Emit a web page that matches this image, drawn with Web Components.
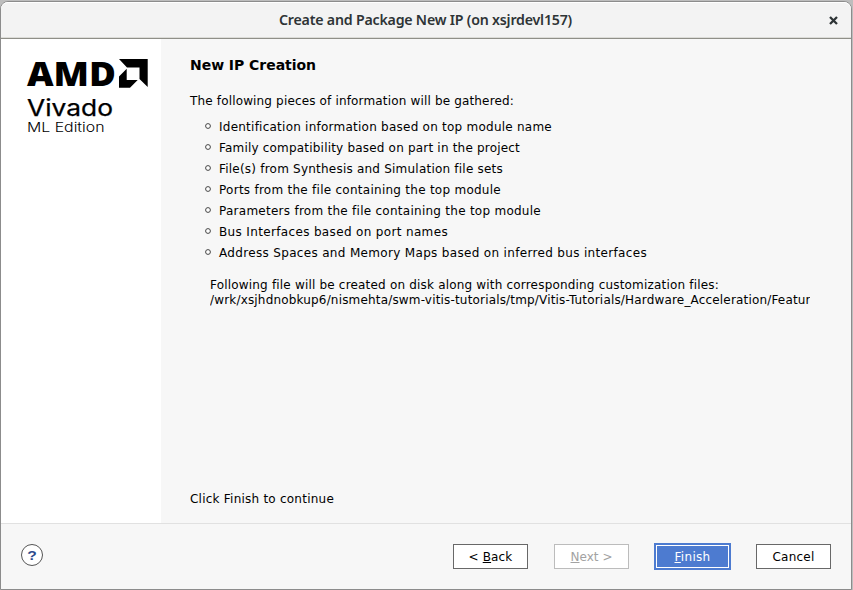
<!DOCTYPE html>
<html lang="en"><head><meta charset="utf-8"><title>Create and Package New IP</title>
<style>
html,body{margin:0;height:100%;overflow:hidden}
body{font:12px/15px "DejaVu Sans",sans-serif;color:#000;background:#bdbdbd}
</style></head><body>
<ip-dialog></ip-dialog>
<script>
const define=(name,html,init)=>customElements.define(name,class extends HTMLElement{
  constructor(){super();this.attachShadow({mode:'open'}).innerHTML=html}
  connectedCallback(){if(init)init(this,this.shadowRoot)}
});

// A single line of text whose tracking is set so that it spans the given width.
define('fit-text',`<style>:host{display:block;white-space:nowrap}span{display:inline-block}</style><span><slot></slot></span>`,(el,root)=>{
  const span=root.querySelector('span');
  requestAnimationFrame(()=>{
    const n=el.textContent.length;
    span.style.letterSpacing=(+el.getAttribute('w')-span.getBoundingClientRect().width)/n+'px';
  });
});

define('title-bar',`<style>
:host{display:grid;grid-template-columns:1fr auto 1fr;align-items:center;height:33px;padding:0 13px 2px 12px;background:#f3f3f3;border-top:1px solid #fff;border-bottom:1px solid #8f8f88;box-shadow:inset 0 -1px #dcdcd8;border-radius:7px 7px 0 0;color:#2e3436;font:600 14.2px/20px "Noto Sans","Open Sans",sans-serif}
::slotted(fit-text){grid-column:2}svg{grid-column:3;justify-self:end;margin-top:1px}
</style><slot></slot>
<svg width="9" height="9" viewBox="0 0 9 9"><path d="M1 1 8 8M8 1 1 8" stroke="#2e3436" stroke-width="2.3"/></svg>`);

define('brand-logo',`<style>:host{display:block}svg{display:block}</style>
<svg width="160" height="110" viewBox="1 39 160 110" fill="#000">
<text x="27" y="86" font-family="Open Sans,sans-serif" font-weight="800" font-size="33" textLength="89" lengthAdjust="spacingAndGlyphs">AMD</text>
<path d="M119 59H147.7V87L139.5 79V67.5H127Z"/><path d="M126.7 68.7 119 76.5V87.7H130L137.7 80H126.7Z"/>
<text x="27" y="115.8" font-family="Inter,sans-serif" font-size="23" stroke="#000" stroke-width=".25" textLength="86" lengthAdjust="spacingAndGlyphs">Vivado</text>
<text x="27" y="131.7" font-family="Inter,sans-serif" font-weight="300" font-size="13.5" textLength="77.5" lengthAdjust="spacingAndGlyphs">ML Edition</text>
</svg>`);

define('bullet-item',`<style>:host{display:flex;align-items:center;height:21px;gap:8px}
svg{flex:none;margin-bottom:3px}</style><svg width="6" height="6" viewBox="0 0 6 6"><circle cx="3" cy="3" r="2.4" fill="#fff" stroke="#444" stroke-width="1"/></svg><slot></slot>`);

define('push-button',`<style>
:host{display:flex;align-items:center;justify-content:center;box-sizing:border-box;width:75px;height:25px;padding-top:1px;border:1px solid #686868;background:#fff;color:#000}
:host([disabled]){border-color:#bcbcbc;color:#a2a2a2}
:host([primary]){width:77px;height:27px;border:2px solid #4d7bd0;box-shadow:inset 0 0 0 1px #fff;background:#4d7bd0;color:#fff}
</style><slot></slot>`);

define('help-button',`<style>:host{display:flex;align-items:center;justify-content:center;box-sizing:border-box;width:22px;height:22px;border:1px solid #555;border-radius:50%;background:#fff;color:#2c4a8c;font:bold 13px/15px "Liberation Sans",sans-serif}span{transform:scaleX(1.2)}</style><span><slot></slot></span>`);

define('ip-dialog',`<style>
:host{display:flex;flex-direction:column;box-sizing:border-box;width:852px;height:590px;padding-top:1px}
.frame{display:flex;flex-direction:column;flex:1;border:1px solid #8c8c8c;border-radius:8px 8px 0 0;background:#f7f7f7;min-height:0}
.body{display:flex;height:484px}
aside{width:160px;background:#fff}
main{display:flex;flex-direction:column;flex:1;padding:18px 40px 16px 29px;min-width:0}
h1{font-size:14px;line-height:17px;margin:0 0 20px}
.list{padding:8px 0 14px 15px}
.note{margin:0 1px 0 20px;overflow:hidden;line-height:15px}
.end{margin-top:auto}
footer{display:flex;align-items:center;flex:1;border-top:1px solid #e1e1e1;padding:0 20px}
help-button{margin:0 auto 3px 0}
.buttons{display:flex;align-items:center}
</style><div class="frame">
<title-bar><fit-text w="293">Create and Package New IP (on xsjrdevl157)</fit-text></title-bar>
<div class="body"><aside><brand-logo></brand-logo></aside><main>
<h1><fit-text w="126">New IP Creation</fit-text></h1>
<fit-text w="324">The following pieces of information will be gathered:</fit-text>
<div class="list">
<bullet-item><fit-text w="333">Identification information based on top module name</fit-text></bullet-item>
<bullet-item><fit-text w="301">Family compatibility based on part in the project</fit-text></bullet-item>
<bullet-item><fit-text w="284">File(s) from Synthesis and Simulation file sets</fit-text></bullet-item>
<bullet-item><fit-text w="282">Ports from the file containing the top module</fit-text></bullet-item>
<bullet-item><fit-text w="322">Parameters from the file containing the top module</fit-text></bullet-item>
<bullet-item><fit-text w="229">Bus Interfaces based on port names</fit-text></bullet-item>
<bullet-item><fit-text w="428">Address Spaces and Memory Maps based on inferred bus interfaces</fit-text></bullet-item>
</div>
<div class="note"><fit-text w="509">Following file will be created on disk along with corresponding customization files:</fit-text>
<fit-text w="608">/wrk/xsjhdnobkup6/nismehta/swm-vitis-tutorials/tmp/Vitis-Tutorials/Hardware_Acceleration/Feature</fit-text></div>
<fit-text class="end" w="144">Click Finish to continue</fit-text>
</main></div>
<footer><help-button>?</help-button><div class="buttons">
<push-button style="margin-right:26px"><fit-text w="44">&lt; <u>B</u>ack</fit-text></push-button>
<push-button disabled style="margin-right:25px"><fit-text w="42"><u>N</u>ext &gt;</fit-text></push-button>
<push-button primary style="margin-right:25px"><fit-text w="36"><u>F</u>inish</fit-text></push-button>
<push-button><fit-text w="42">Cancel</fit-text></push-button>
</div></footer></div>`);
</script></body></html>
